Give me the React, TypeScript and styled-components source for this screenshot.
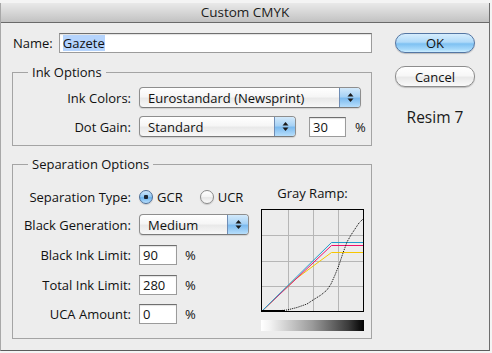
import React from "react";
import styled, { createGlobalStyle } from "styled-components";

const Global = createGlobalStyle`
  html, body { margin: 0; padding: 0; background: #f4f4f4; }
  body { font-family: "Open Sans", "DejaVu Sans", sans-serif; font-size: 13px; color: #111; }
  #root { width: 492px; height: 353px; overflow: hidden; }
`;

const Window = styled.div`
  margin-top: 3px;
  width: 490px;
  height: 348px;
  box-sizing: border-box;
  background: #ededed;
  border-left: 1px solid #a8a8a8;
  border-right: 1px solid #6d6d6d;
  border-bottom: 1px solid #5c5c5c;
  display: flex;
  flex-direction: column;
`;

const TitleBar = styled.div`
  height: 19px;
  border-bottom: 1px solid #6a6a6a;
  background: linear-gradient(#e9e9e9, #d6d6d6 50%, #c2c2c2);
  text-align: center;
  font-size: 13.5px;
  line-height: 19px;
  color: #1c1c1c;
`;

const Body = styled.div`
  display: flex;
  padding: 10px 0 0 11px;
`;

const LeftColumn = styled.div`
  width: 360px;
  display: flex;
  flex-direction: column;
`;

const RightColumn = styled.div`
  width: 80px;
  margin-left: 23px;
  display: flex;
  flex-direction: column;
  align-items: center;
`;

const NameRow = styled.div`
  display: flex;
  align-items: center;
  height: 20px;
  padding-left: 1px;
  gap: 6px;
`;

const Label = styled.span`
  line-height: 16px;
  white-space: nowrap;
`;

const FieldLabel = styled(Label)`
  text-align: right;
`;

const TextField = styled.div<{ $w: number }>`
  width: ${(p) => p.$w}px;
  height: 20px;
  box-sizing: border-box;
  background: #fff;
  border: 1px solid #9b9b9b;
  border-top-color: #6f6f6f;
  box-shadow: inset 0 1px 1px rgba(0, 0, 0, 0.12);
  padding-left: 3px;
  display: flex;
  align-items: center;
  line-height: 16px;
`;

const Selected = styled.span`
  background: #b5d4fd;
`;

const Group = styled.fieldset<{ $top: number; $pb: number }>`
  margin: ${(p) => p.$top}px 0 0 0;
  padding: 0 7px ${(p) => p.$pb}px 0;
  border: 1px solid #a4a4a4;
  min-width: 0;
`;

const Legend = styled.legend`
  margin-left: 15px;
  padding: 0 4px;
  line-height: 16px;
  font-size: 13px;
`;

const FormGrid = styled.div<{ $pt: number }>`
  display: grid;
  grid-template-columns: 118px auto;
  column-gap: 8px;
  row-gap: 8px;
  align-items: center;
  align-content: start;
  justify-items: start;
  padding-top: ${(p) => p.$pt}px;
  & > ${FieldLabel} { justify-self: end; }
`;

const SepGrid = styled(FormGrid)`
  grid-template-rows: 16px 21px 21px 21px 20px;
  row-gap: 9px;
  align-self: flex-start;
`;

const Inline = styled.div<{ $gap: number }>`
  display: flex;
  align-items: center;
  gap: ${(p) => p.$gap}px;
`;

const Popup = styled.div<{ $w: number }>`
  width: ${(p) => p.$w}px;
  height: 21px;
  box-sizing: border-box;
  border: 1px solid #8e8e8e;
  border-bottom-color: #7a7a7a;
  border-radius: 4px;
  background: linear-gradient(#ffffff, #f6f6f6 45%, #e9e9e9 55%, #f8f8f8);
  box-shadow: 0 1px 1px rgba(0, 0, 0, 0.12);
  display: flex;
  align-items: center;
  overflow: hidden;
`;

const PopupText = styled.span`
  flex: 1;
  padding-left: 8px;
  line-height: 16px;
  white-space: nowrap;
`;

const PopupArrows = styled.span`
  width: 20px;
  align-self: stretch;
  border-left: 1px solid #6f8db5;
  background: linear-gradient(#d2e9fb, #a7d2f5 45%, #7dbbef 55%, #b7defb);
  display: flex;
  align-items: center;
  justify-content: center;
`;

const Percent = styled.span`
  line-height: 16px;
`;

const RadioDot = styled.span<{ $on?: boolean }>`
  width: 14px;
  height: 14px;
  box-sizing: border-box;
  border-radius: 50%;
  border: 1px solid ${(p) => (p.$on ? "#4d6d96" : "#8a8a8a")};
  background: ${(p) =>
    p.$on
      ? "radial-gradient(circle at 50% 50%, #1d2633 0 2px, transparent 2.5px), linear-gradient(#cfe7fb, #8fc6f2 50%, #6cb2ed 55%, #b9e0fc)"
      : "linear-gradient(#ffffff, #f3f3f3 50%, #e6e6e6 55%, #fbfbfb)"};
  box-shadow: 0 1px 1px rgba(0, 0, 0, 0.15);
`;

const RadioItem = styled.span`
  display: flex;
  align-items: center;
  gap: 4px;
  line-height: 16px;
`;

const SepContent = styled.div`
  display: flex;
  align-items: flex-start;
  padding-top: 13px;
`;

const Ramp = styled.div`
  margin-left: auto;
  display: flex;
  flex-direction: column;
  align-items: center;
  width: 103px;
`;

const RampLabel = styled.span`
  line-height: 16px;
  margin-bottom: 8px;
`;

const RampBar = styled.div`
  width: 103px;
  height: 11px;
  margin-top: 8px;
  background: linear-gradient(to right, #ffffff 0%, #f4f4f4 8%, #9a9a9a 50%, #3a3a3a 85%, #000 100%);
`;

const OkButton = styled.div`
  width: 80px;
  height: 20px;
  box-sizing: border-box;
  border-radius: 10px;
  border: 1px solid #5476a3;
  background: linear-gradient(#d6edfd, #b0daf9 45%, #7ec1f2 55%, #a6d9fb 85%, #cdeeff);
  box-shadow: 0 1px 1px rgba(0, 0, 0, 0.2);
  display: flex;
  align-items: center;
  justify-content: center;
  line-height: 16px;
`;

const CancelButton = styled(OkButton)`
  height: 21px;
  margin-top: 13px;
  border-color: #8d8d8d;
  background: linear-gradient(#ffffff, #f7f7f7 45%, #e9e9e9 55%, #fafafa);
`;

const Caption = styled.div`
  margin-top: 20px;
  font-size: 15.5px;
  line-height: 20px;
  color: #1a1a1a;
`;

const Arrows = () => (
  <svg width="7" height="11" viewBox="0 0 7 11">
    <path d="M3.5 1 L6.5 4.5 L0.5 4.5 Z" fill="#1a1a1a" />
    <path d="M3.5 10 L6.5 6.5 L0.5 6.5 Z" fill="#1a1a1a" />
  </svg>
);

const PopupButton = ({ w, text }: { w: number; text: string }) => (
  <Popup $w={w}>
    <PopupText>{text}</PopupText>
    <PopupArrows>
      <Arrows />
    </PopupArrows>
  </Popup>
);

const GrayRamp = () => {
  const black: [number, number][] = [
    [1, 102], [15, 102], [26, 101], [36, 98.5], [46, 95], [52, 91], [60, 86], [66, 81], [70, 75],
    [74, 66], [78, 56], [82, 44], [86, 33], [90, 26], [94, 20], [98, 14], [102, 10],
  ];
  return (
    <svg width="103" height="103" viewBox="0 0 103 103">
      <rect x="0" y="0" width="103" height="103" fill="#ececec" />
      {[27.5, 52.5, 77.5].map((v) => (
        <line key={"v" + v} x1={v} y1="1" x2={v} y2="102" stroke="#b6b6b6" strokeWidth="1" />
      ))}
      {[26.5, 52.5, 77.5].map((v) => (
        <line key={"h" + v} x1="1" y1={v} x2="102" y2={v} stroke="#b6b6b6" strokeWidth="1" />
      ))}
      <polyline points="1,102 34,70.5 70.5,43.5 102,43.5" fill="none" stroke="#f7c600" strokeWidth="1" />
      <polyline points="1,102 70.5,36.5 102,36.5" fill="none" stroke="#ee0f6a" strokeWidth="1" />
      <polyline points="1,102 70.5,33.5 102,33.5" fill="none" stroke="#1f9dcc" strokeWidth="1" />
      <polyline
        points={black.map((p) => p.join(",")).join(" ")}
        fill="none"
        stroke="#000"
        strokeWidth="1"
        strokeDasharray="1 1"
      />
      <line x1="1" y1="101.5" x2="24" y2="101.5" stroke="#000" strokeWidth="1" />
      <rect x="0.5" y="0.5" width="102" height="102" fill="none" stroke="#000" strokeWidth="1" />
    </svg>
  );
};

export default function App() {
  return (
    <>
      <Global />
      <Window>
        <TitleBar>Custom CMYK</TitleBar>
        <Body>
          <LeftColumn>
            <NameRow>
              <Label>Name:</Label>
              <TextField $w={315}>
                <Selected>Gazete</Selected>
              </TextField>
            </NameRow>

            <Group $top={11} $pb={8}>
              <Legend>Ink Options</Legend>
              <FormGrid $pt={7}>
                <FieldLabel>Ink Colors:</FieldLabel>
                <PopupButton w={222} text="Eurostandard (Newsprint)" />
                <FieldLabel>Dot Gain:</FieldLabel>
                <Inline $gap={13}>
                  <PopupButton w={157} text="Standard" />
                  <Inline $gap={9}>
                    <TextField $w={37}>30</TextField>
                    <Percent>%</Percent>
                  </Inline>
                </Inline>
              </FormGrid>
            </Group>

            <Group $top={10} $pb={7}>
              <Legend>Separation Options</Legend>
              <SepContent>
                <SepGrid $pt={4}>
                  <FieldLabel>Separation Type:</FieldLabel>
                  <Inline $gap={17}>
                    <RadioItem>
                      <RadioDot $on />
                      GCR
                    </RadioItem>
                    <RadioItem>
                      <RadioDot />
                      UCR
                    </RadioItem>
                  </Inline>
                  <FieldLabel>Black Generation:</FieldLabel>
                  <PopupButton w={110} text="Medium" />
                  <FieldLabel>Black Ink Limit:</FieldLabel>
                  <Inline $gap={8}>
                    <TextField $w={38}>90</TextField>
                    <Percent>%</Percent>
                  </Inline>
                  <FieldLabel>Total Ink Limit:</FieldLabel>
                  <Inline $gap={8}>
                    <TextField $w={38}>280</TextField>
                    <Percent>%</Percent>
                  </Inline>
                  <FieldLabel>UCA Amount:</FieldLabel>
                  <Inline $gap={8}>
                    <TextField $w={38}>0</TextField>
                    <Percent>%</Percent>
                  </Inline>
                </SepGrid>
                <Ramp>
                  <RampLabel>Gray Ramp:</RampLabel>
                  <GrayRamp />
                  <RampBar />
                </Ramp>
              </SepContent>
            </Group>
          </LeftColumn>
          <RightColumn>
            <OkButton>OK</OkButton>
            <CancelButton>Cancel</CancelButton>
            <Caption>Resim 7</Caption>
          </RightColumn>
        </Body>
      </Window>
    </>
  );
}
